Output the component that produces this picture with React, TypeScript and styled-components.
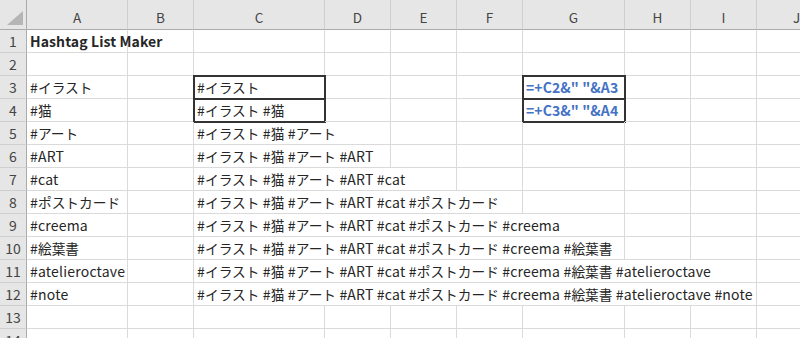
import React from "react";
import styled, { createGlobalStyle } from "styled-components";

const Global = createGlobalStyle`
  html, body { margin: 0; padding: 0; background: #ffffff; overflow: hidden; }
  body { font-family: "Noto Sans CJK JP", sans-serif; }
`;

const COLS = [27, 101, 66, 131, 66, 66, 66, 102, 66, 66, 80];
const LETTERS = ["A", "B", "C", "D", "E", "F", "G", "H", "I", "J"];

const Sheet = styled.div`
  display: grid;
  grid-template-columns: ${COLS.map((c) => `${c}px`).join(" ")};
  grid-template-rows: 30px repeat(14, 23px);
  width: ${COLS.reduce((a, b) => a + b, 0)}px;
  background: #ffffff;
`;

const Corner = styled.div`
  background: #e6e6e6;
  border-right: 1px solid #ababab;
  border-bottom: 1px solid #ababab;
  display: flex;
  align-items: flex-end;
  justify-content: flex-end;
  padding: 0 3px 4px 0;
`;

const ColHead = styled.div`
  background: #e6e6e6;
  border-right: 1px solid #cfcfcf;
  border-bottom: 1px solid #ababab;
  display: flex;
  align-items: center;
  justify-content: center;
  padding-top: 5px;
  font-family: "Noto Sans CJK JP", sans-serif;
  font-size: 13.5px;
  color: #444444;
`;

const RowHead = styled.div`
  background: #e6e6e6;
  border-right: 1px solid #ababab;
  border-bottom: 1px solid #cfcfcf;
  display: flex;
  align-items: center;
  justify-content: center;
  font-family: "Noto Sans CJK JP", sans-serif;
  font-size: 14px;
  color: #444444;
`;

const Cell = styled.div<{ $span?: number; $bold?: boolean; $blue?: boolean; $boxed?: boolean }>`
  grid-column: span ${(p) => p.$span ?? 1};
  border-right: 1px solid #dadada;
  border-bottom: 1px solid #dadada;
  display: flex;
  align-items: center;
  padding: 0 0 0 3px;
  white-space: pre;
  overflow: visible;
  font-family: "Noto Sans CJK JP", sans-serif;
  font-size: 13.7px;
  color: ${(p) => (p.$blue ? "#4472c4" : "#262626")};
  font-weight: ${(p) => (p.$bold ? 700 : 400)};
  ${(p) => (p.$boxed ? "outline: 2px solid #333333; outline-offset: -1px;" : "")}
`;

const Latin = styled.span<{ $bold?: boolean }>`
  font-size: 14px;
  letter-spacing: ${(p) => (p.$bold ? "0.1px" : "0.2px")};
`;

const Triangle = () => (
  <svg width="16" height="14" viewBox="0 0 16 14">
    <polygon points="16,0 16,14 0,14" fill="#b5b5b5" />
  </svg>
);

type CellDef = { text?: string; span?: number; bold?: boolean; blue?: boolean; boxed?: boolean };

const colA = ["Hashtag List Maker", "", "#イラスト", "#猫", "#アート", "#ART", "#cat", "#ポストカード", "#creema", "#絵葉書", "#atelieroctave", "#note", "", ""];
const tags = colA.slice(2, 12);
const cumulative = tags.map((_, i) => tags.slice(0, i + 1).join(" "));
const cSpans = [1, 1, 2, 2, 3, 4, 5, 5, 7, 7];

function buildRow(r: number): CellDef[] {
  const cells: CellDef[] = [];
  cells.push({ text: colA[r - 1], bold: r === 1 });
  cells.push({});
  let used = 2;
  if (r >= 3 && r <= 12) {
    const idx = r - 3;
    cells.push({ text: cumulative[idx], span: cSpans[idx], boxed: r === 3 || r === 4 });
    used += cSpans[idx];
  }
  while (used < 10) {
    if (used === 6 && (r === 3 || r === 4)) {
      cells.push({ text: r === 3 ? '=+C2&" "&A3' : '=+C3&" "&A4', bold: true, blue: true, boxed: true });
    } else {
      cells.push({});
    }
    used += 1;
  }
  return cells;
}

const CJK = /[\u3040-\u30ff\u3400-\u9fff]/;

function renderText(s: string | undefined, bold?: boolean) {
  if (!s) return null;
  const parts = s.split(/([\u3040-\u30ff\u3400-\u9fff]+)/).filter((p) => p.length > 0);
  return parts.map((p, i) =>
    CJK.test(p) ? (
      <React.Fragment key={i}>{p}</React.Fragment>
    ) : (
      <Latin key={i} $bold={bold}>
        {p}
      </Latin>
    )
  );
}

export default function App() {
  const rows = Array.from({ length: 14 }, (_, i) => i + 1);
  return (
    <>
      <Global />
      <Sheet>
        <Corner>
          <Triangle />
        </Corner>
        {LETTERS.map((l) => (
          <ColHead key={l}>{l}</ColHead>
        ))}
        {rows.map((r) => (
          <React.Fragment key={r}>
            <RowHead>{r}</RowHead>
            {buildRow(r).map((c, i) => (
              <Cell key={i} $span={c.span} $bold={c.bold} $blue={c.blue} $boxed={c.boxed}>
                {renderText(c.text, c.bold)}
              </Cell>
            ))}
          </React.Fragment>
        ))}
      </Sheet>
    </>
  );
}
